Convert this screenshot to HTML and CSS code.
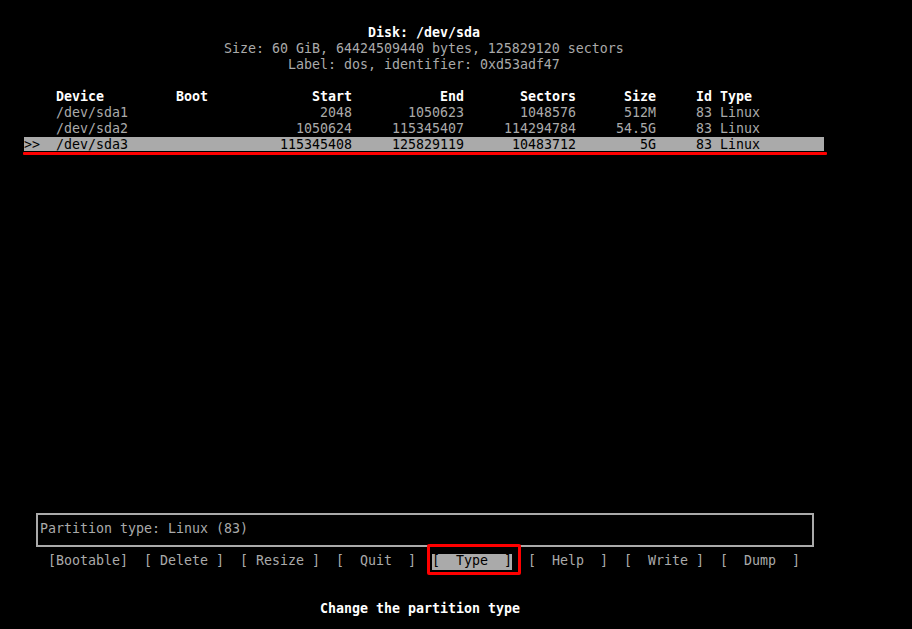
FILE: index.html
```html
<!DOCTYPE html>
<html>
<head>
<meta charset="utf-8">
<title>cfdisk</title>
<link rel="stylesheet" href="styles.css">
</head>
<body>
<div class="screen">
  <div class="info">
    <div class="line bold disk">Disk: /dev/sda</div>
    <div class="line size">Size: 60 GiB, 64424509440 bytes, 125829120 sectors</div>
    <div class="line label">Label: dos, identifier: 0xd53adf47</div>
  </div>

  <div class="table">
    <div class="row head">
      <span class="mark"></span><span>Device</span><span>Boot</span><span class="r">Start</span><span class="r">End</span><span class="r">Sectors</span><span class="r">Size</span><span class="r">Id</span><span class="type">Type</span>
    </div>
    <div class="row">
      <span class="mark"></span><span>/dev/sda1</span><span></span><span class="r">2048</span><span class="r">1050623</span><span class="r">1048576</span><span class="r">512M</span><span class="r">83</span><span class="type">Linux</span>
    </div>
    <div class="row">
      <span class="mark"></span><span>/dev/sda2</span><span></span><span class="r">1050624</span><span class="r">115345407</span><span class="r">114294784</span><span class="r">54.5G</span><span class="r">83</span><span class="type">Linux</span>
    </div>
    <div class="row sel">
      <span class="mark">&gt;&gt;</span><span>/dev/sda3</span><span></span><span class="r">115345408</span><span class="r">125829119</span><span class="r">10483712</span><span class="r">5G</span><span class="r">83</span><span class="type">Linux</span>
    </div>
  </div>

  <div class="bottom">
    <div class="status">Partition type: Linux (83)</div>
    <div class="menu">
      <span class="btn">[Bootable]</span>
      <span class="btn">[ Delete ]</span>
      <span class="btn">[ Resize ]</span>
      <span class="btn">[  Quit  ]</span>
      <span class="btn active">[  Type  ]</span>
      <span class="btn">[  Help  ]</span>
      <span class="btn">[  Write ]</span>
      <span class="btn">[  Dump  ]</span>
    </div>
    <div class="hint bold">Change the partition type</div>
  </div>
</div>
</body>
</html>
```

FILE: styles.css
```css
html, body {
  margin: 0;
  padding: 0;
  background: #000;
}

body {
  font-family: "DejaVu Sans Mono", "Liberation Mono", monospace;
  font-size: 13.29px;
  line-height: 16px;
  color: #aaaaaa;
}

.screen {
  height: 629px;
  box-sizing: border-box;
  padding: 25px 0 12px 0;
  display: flex;
  flex-direction: column;
  overflow: hidden;
}

.line {
  white-space: pre;
  height: 16px;
}

.bold {
  font-weight: bold;
  color: #ffffff;
}

.disk { padding-left: 368px; }
.size { padding-left: 224px; }
.label { padding-left: 288px; }

.info {
  margin-bottom: 16px;
}

.table {
  margin-left: 24px;
  width: 800px;
}

.row {
  display: grid;
  grid-template-columns: 32px 120px 64px 112px 112px 112px 80px 56px 112px;
  height: 16px;
  white-space: pre;
  position: relative;
}

.row .r { text-align: right; }
.row .type { padding-left: 8px; }

.row.head {
  font-weight: bold;
  color: #ffffff;
}

.row.sel {
  color: #000;
  background: linear-gradient(#aaaaaa, #aaaaaa) 0 0 / 100% 14px no-repeat;
}

.row.sel::after {
  content: "";
  position: absolute;
  left: -1px;
  right: -3px;
  top: 15px;
  height: 3px;
  background: #ff0000;
  border-radius: 1px;
}

.bottom {
  margin-top: auto;
}

.status {
  margin-left: 36px;
  width: 778px;
  box-sizing: border-box;
  border: 2px solid #aaaaaa;
  padding: 6px 0 8px 2px;
  white-space: pre;
}

.menu {
  margin-top: 6px;
  padding-left: 48px;
  display: flex;
  align-items: flex-start;
  gap: 16px;
}

.btn {
  width: 80px;
  height: 16px;
  white-space: pre;
  flex: none;
}

.btn.active {
  position: relative;
  color: #000;
  padding-bottom: 1px;
  background: linear-gradient(#aaaaaa, #aaaaaa) 0 1px / 100% 16px no-repeat;
}

.btn.active::after {
  content: "";
  position: absolute;
  top: -9px;
  bottom: -5px;
  left: -5px;
  right: -9px;
  border: 3px solid #ff0000;
  border-radius: 2px;
}

.hint {
  margin-top: 31px;
  padding-left: 320px;
  white-space: pre;
  height: 16px;
}
```
